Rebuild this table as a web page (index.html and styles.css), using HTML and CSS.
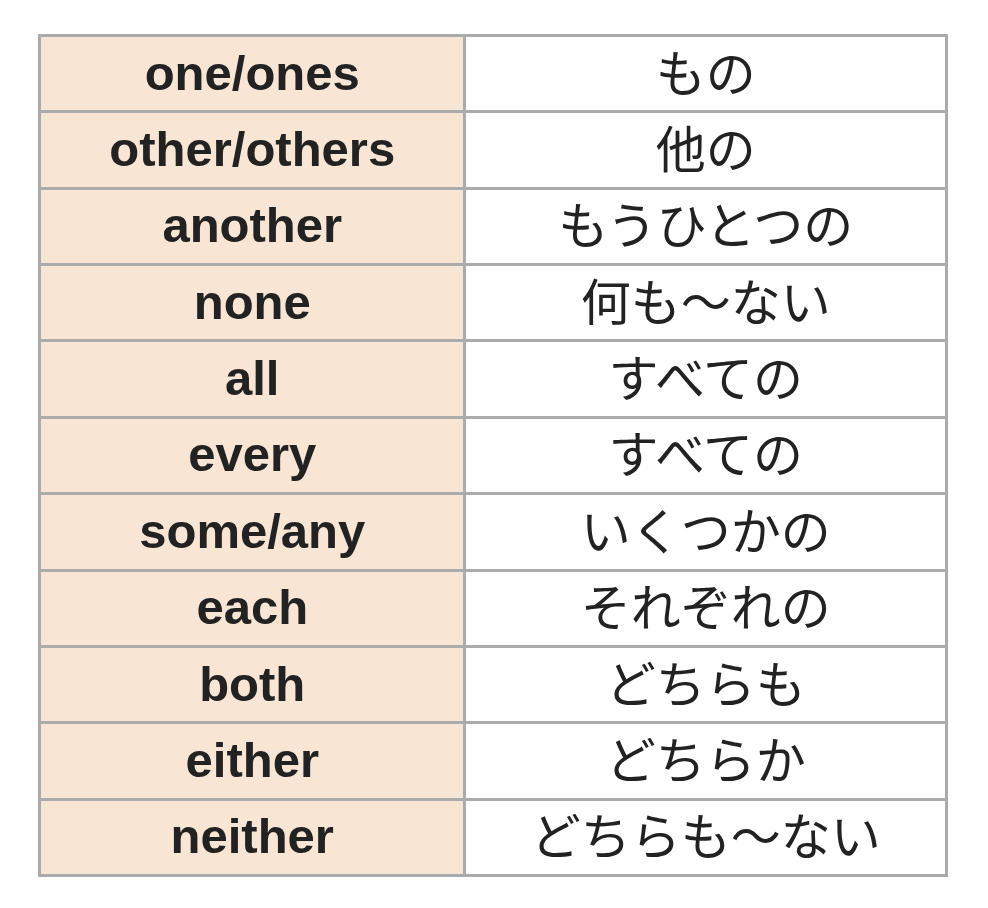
FILE: index.html
```html
<!DOCTYPE html>
<html lang="ja">
<head>
<meta charset="utf-8">
<link rel="stylesheet" href="styles.css">
</head>
<body>
<table class="vocab">
  <colgroup><col class="col-en"><col class="col-ja"></colgroup>
  <tbody>
    <tr><td class="en">one/ones</td><td class="ja">もの</td></tr>
    <tr><td class="en">other/others</td><td class="ja">他の</td></tr>
    <tr><td class="en">another</td><td class="ja">もうひとつの</td></tr>
    <tr><td class="en">none</td><td class="ja">何も〜ない</td></tr>
    <tr><td class="en">all</td><td class="ja">すべての</td></tr>
    <tr><td class="en">every</td><td class="ja">すべての</td></tr>
    <tr><td class="en">some/any</td><td class="ja">いくつかの</td></tr>
    <tr><td class="en">each</td><td class="ja">それぞれの</td></tr>
    <tr><td class="en">both</td><td class="ja">どちらも</td></tr>
    <tr><td class="en">either</td><td class="ja">どちらか</td></tr>
    <tr><td class="en">neither</td><td class="ja">どちらも〜ない</td></tr>
  </tbody>
</table>
</body>
</html>
```
FILE: styles.css
```css
html, body {
  margin: 0;
  padding: 0;
  background: #ffffff;
}
body {
  padding: 34px 0 0 38px;
}
.vocab {
  table-layout: fixed;
  width: 910px;
  border-collapse: separate;
  border-spacing: 3px;
  background: #ababab;
}
.col-en { width: 422px; }
.col-ja { width: 478px; }
.vocab td {
  height: 73.36px;
  padding: 0;
  text-align: center;
  vertical-align: middle;
  color: #222222;
  line-height: 1;
}
.en {
  background: #f8e5d3;
  font-family: "Liberation Sans", Arial, sans-serif;
  font-weight: 700;
  font-size: 49px;
}
.vocab td.en {
  padding: 0 0 1px 0;
  height: 72.36px;
}
.ja {
  background: #ffffff;
  font-family: "Noto Sans CJK JP", sans-serif;
  font-weight: 400;
  font-size: 50px;
}
.vocab td.ja {
  padding: 0 0 8px 0;
  height: 65.36px;
}
```
